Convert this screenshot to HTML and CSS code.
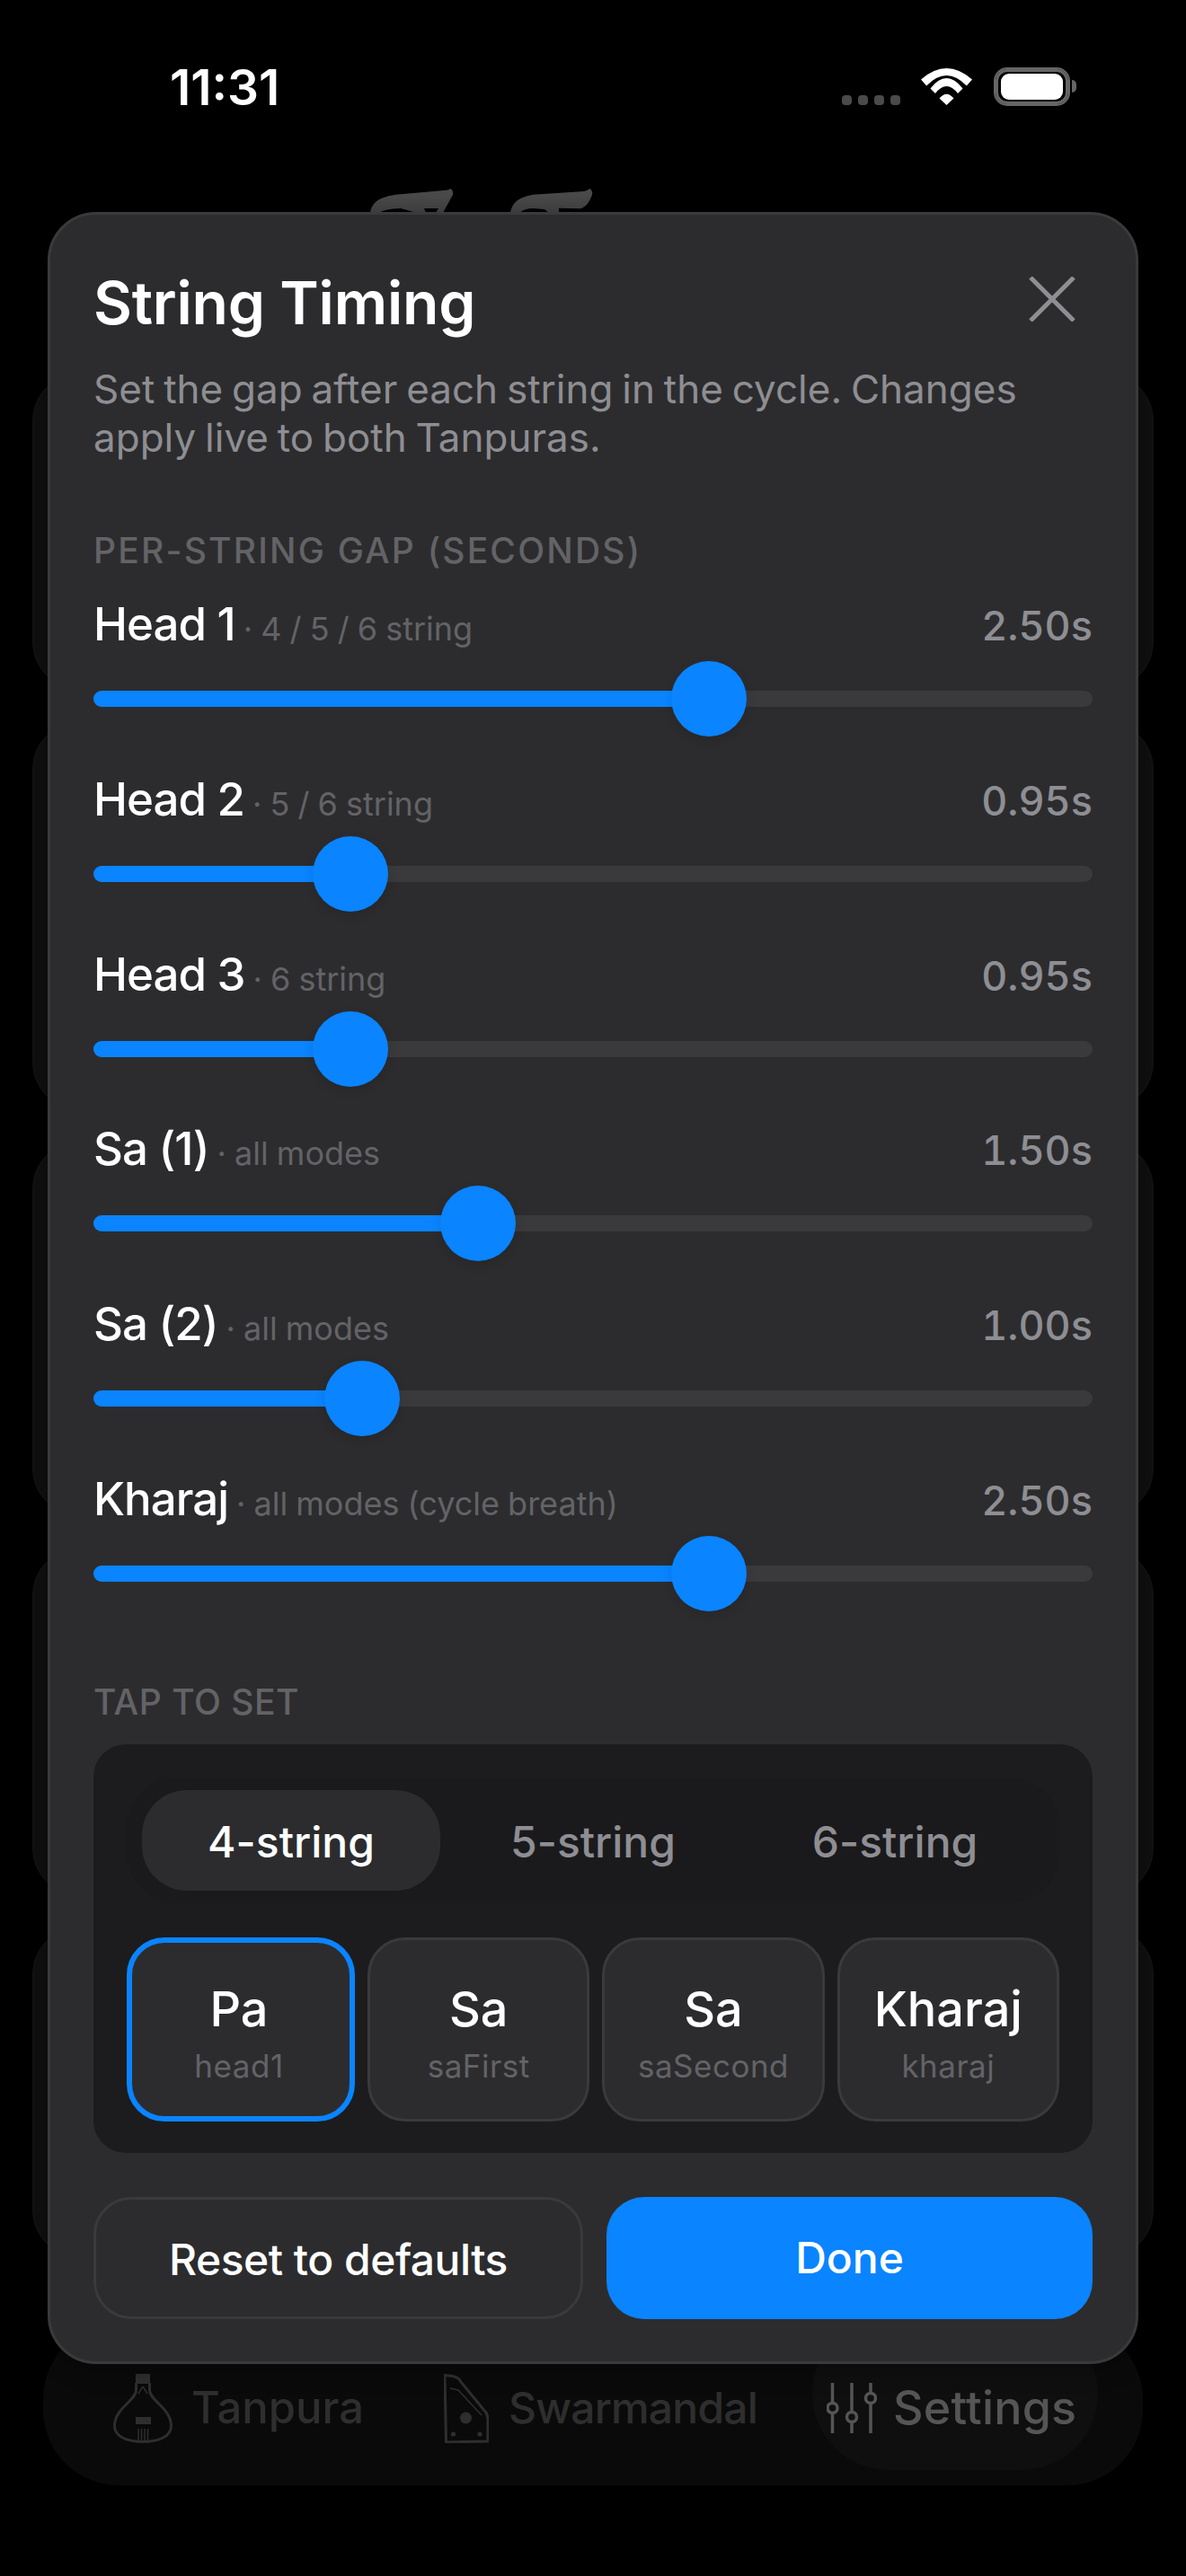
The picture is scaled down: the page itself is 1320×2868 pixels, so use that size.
FILE: index.html
```html
<!DOCTYPE html>
<html lang="en">
<head>
    <meta charset="UTF-8">
    <meta name="viewport" content="width=device-width, initial-scale=1.0">
    <title>String Timing</title>
    <link rel="stylesheet" href="styles.css">
</head>
<body>
    <div class="page">
        <!-- Status bar -->
        <div class="status">
            <span class="clock">11:31</span>
            <div class="status-icons">
                <div class="signal"><i></i><i></i><i></i><i></i></div>
                <svg class="wifi" viewBox="0 0 57 41" width="57" height="41">
                    <path d="M0 12.5Q28.5-12.5 57 12.5L50.8 19.5Q28.5-3.5 6.2 19.5Z"/>
                    <path d="M10.5 22.5Q28.5-.5 46.5 22.5L41 28Q28.5 12 16 28Z"/>
                    <path d="M20.5 33.5Q28.5 24 36.5 33.5L28.5 41Z"/>
                </svg>
                <div class="battery"><div class="battery-level"></div></div>
                <div class="battery-nub"></div>
            </div>
        </div>

        <!-- Dimmed screen behind the sheet -->
        <svg class="logo" viewBox="0 0 250 27" width="250" height="27">
            <path fill-rule="evenodd" d="M0 27C2 16 8 10 28 6.7L84.7 1.7Q87 1.5 89.7 0Q93 3 92 6.7L81 27ZM10 27Q16 22.5 34 22L52 27ZM60 22L76 22L73 27L62 27Z"/>
            <path fill-rule="evenodd" d="M156 27C158 16 164 10 181 6.7L238 3Q241 2.5 244.7 0Q248 3 247 7Q243 19 234.7 22.3L210 21.7L210 27ZM166 27Q172 22 181 22L194 23L199 27Z"/>
        </svg>
        <div class="cards">
            <div class="card card-a"></div>
            <div class="card card-b"></div>
            <div class="card card-c"></div>
            <div class="card card-d"></div>
            <div class="card card-e"></div>
        </div>
        <nav class="tabbar">
            <div class="tab tab-tanpura">
                <svg class="tab-icon" viewBox="0 0 66 77" width="66" height="77">
                    <rect class="solid" x="25" y="0" width="16" height="11"/>
                    <path d="M25.5 10V18C25.5 30 1.5 38 1.5 58C1.5 70 16 75.5 33 75.5C50 75.5 64.5 70 64.5 58C64.5 38 40.5 30 40.5 18V10"/>
                    <path class="inner" d="M33 14L28 22M33 14L38 22"/>
                    <rect class="solid" x="25" y="48" width="17" height="8"/>
                    <path class="inner" d="M28 61V75M31.5 61V75M35 61V75M38.5 61V75"/>
                </svg>
                <span>Tanpura</span>
            </div>
            <div class="tab tab-swar">
                <svg class="tab-icon" viewBox="0 0 50 77" width="50" height="77">
                    <path d="M1 1.5L10 2.5Q17 4 19 9L47 43Q49 47 49 52V75L2.5 76Z"/>
                    <path class="inner" d="M7 16L16 18L42 46"/>
                    <circle class="solid" cx="24.5" cy="49" r="6.5"/>
                    <circle class="solid" cx="10.5" cy="67" r="2.6"/>
                    <circle class="solid" cx="40" cy="67" r="2.6"/>
                </svg>
                <span>Swarmandal</span>
            </div>
            <div class="tab tab-settings">
                <svg class="tab-icon" viewBox="0 0 56 56" width="56" height="56">
                    <path d="M6.5 0V56M28 0V56M49 0V56"/>
                    <circle class="knob" cx="6.5" cy="28" r="5.5"/>
                    <circle class="knob" cx="28" cy="38" r="5.5"/>
                    <circle class="knob" cx="49" cy="17" r="5.5"/>
                </svg>
                <span>Settings</span>
            </div>
        </nav>

        <!-- Sheet -->
        <section class="sheet">
            <div class="sheet-head">
                <h1>String Timing</h1>
                <svg class="close" viewBox="0 0 52 50" width="52" height="50">
                    <path d="M2 1L50 49M50 1L2 49"/>
                </svg>
            </div>
            <p class="intro">Set the gap after each string in the cycle. Changes apply live to both Tanpuras.</p>

            <h2 class="section-label gap-label">PER-STRING GAP (SECONDS)</h2>
            <div class="sliders">
                <div class="slider-row">
                    <div class="slider-head">
                        <div class="slider-name">Head 1<small>· 4 / 5 / 6 string</small></div>
                        <span class="slider-value">2.50s</span>
                    </div>
                    <div class="slider" style="--v:.625"><div class="fill"></div><div class="thumb"></div></div>
                </div>
                <div class="slider-row">
                    <div class="slider-head">
                        <div class="slider-name">Head 2<small>· 5 / 6 string</small></div>
                        <span class="slider-value">0.95s</span>
                    </div>
                    <div class="slider" style="--v:.2375"><div class="fill"></div><div class="thumb"></div></div>
                </div>
                <div class="slider-row">
                    <div class="slider-head">
                        <div class="slider-name">Head 3<small>· 6 string</small></div>
                        <span class="slider-value">0.95s</span>
                    </div>
                    <div class="slider" style="--v:.2375"><div class="fill"></div><div class="thumb"></div></div>
                </div>
                <div class="slider-row">
                    <div class="slider-head">
                        <div class="slider-name">Sa (1)<small>· all modes</small></div>
                        <span class="slider-value">1.50s</span>
                    </div>
                    <div class="slider" style="--v:.375"><div class="fill"></div><div class="thumb"></div></div>
                </div>
                <div class="slider-row">
                    <div class="slider-head">
                        <div class="slider-name">Sa (2)<small>· all modes</small></div>
                        <span class="slider-value">1.00s</span>
                    </div>
                    <div class="slider" style="--v:.25"><div class="fill"></div><div class="thumb"></div></div>
                </div>
                <div class="slider-row">
                    <div class="slider-head">
                        <div class="slider-name">Kharaj<small>· all modes (cycle breath)</small></div>
                        <span class="slider-value">2.50s</span>
                    </div>
                    <div class="slider" style="--v:.625"><div class="fill"></div><div class="thumb"></div></div>
                </div>
            </div>

            <h2 class="section-label tap-label">TAP TO SET</h2>
            <div class="tap-panel">
                <div class="segments">
                    <div class="segment active">4-string</div>
                    <div class="segment">5-string</div>
                    <div class="segment">6-string</div>
                </div>
                <div class="tiles">
                    <div class="tile active"><strong>Pa</strong><span>head1</span></div>
                    <div class="tile"><strong>Sa</strong><span>saFirst</span></div>
                    <div class="tile"><strong>Sa</strong><span>saSecond</span></div>
                    <div class="tile"><strong>Kharaj</strong><span>kharaj</span></div>
                </div>
            </div>

            <div class="actions">
                <button type="button" class="btn btn-reset">Reset to defaults</button>
                <button type="button" class="btn btn-done">Done</button>
            </div>
        </section>
    </div>
</body>
</html>
```

FILE: styles.css
```css
/* General Reset */
* {
    margin: 0;
    padding: 0;
    box-sizing: border-box;
}

body {
    background-color: #000;
    font-family: Inter, "Noto Sans", sans-serif;
}

.page {
    position: relative;
    width: 1320px;
    height: 2868px;
    overflow: hidden;
    background-color: #000;
}

/* Status bar */
.status {
    display: flex;
    justify-content: space-between;
    height: 210px;
    padding: 66px 122px 0 189px;
}

.clock {
    color: #fff;
    font-size: 55px;
    line-height: 62px;
    font-weight: 600;
}

.status-icons {
    display: flex;
    height: 43px;
    margin-top: 9px;
}

.signal {
    display: flex;
    gap: 6.5px;
    align-self: flex-end;
    margin-bottom: 1px;
}

.signal i {
    width: 11.5px;
    height: 11px;
    border-radius: 4px;
    background-color: #4a4a4a;
}

.wifi {
    margin: 1px 0 0 23px;
    fill: #fff;
}

.battery {
    width: 85px;
    height: 43px;
    margin-left: 24px;
    padding: 5px 6px;
    border: 2px solid #666;
    border-radius: 15px;
    box-shadow: inset 0 0 0 3px #666;
}

.battery-level {
    height: 100%;
    border-radius: 9px;
    background-color: #fff;
}

.battery-nub {
    width: 5px;
    height: 14px;
    margin: 14px 0 0 2px;
    border-radius: 0 5px 5px 0;
    background-color: #666;
}

/* Dimmed screen */
.logo {
    display: block;
    margin-left: 412px;
    fill: #4c4c4c;
}

.cards {
    display: flex;
    flex-direction: column;
    gap: 34.5px;
    margin: 178px 36px 0;
}

.card {
    border: 2px solid #131313;
    border-radius: 54px;
    background-color: #101011;
}

.card-a { height: 353px; }
.card-b { height: 433px; }
.card-c { height: 418px; }
.card-d { height: 388px; }
.card-e { height: 369px; }

.tabbar {
    display: flex;
    align-items: center;
    width: 1224px;
    height: 180px;
    margin: 73px 0 0 48px;
    padding-top: 8px;
    border-radius: 84px;
    background-color: #0a0a0a;
}

.tab {
    display: flex;
    align-items: center;
    font-size: 49px;
    line-height: 60px;
    font-weight: 500;
    color: #2e2e2e;
}

.tab-icon {
    fill: none;
    stroke: currentColor;
    stroke-width: 3;
}

.tab-icon .solid {
    fill: currentColor;
    stroke: none;
}

.tab-icon .inner {
    stroke-width: 1.5;
}

.tab-tanpura {
    gap: 21px;
    margin-left: 78px;
}

.tab-swar {
    gap: 22px;
    margin-left: 89px;
    font-size: 48px;
    letter-spacing: -0.8px;
}

.tab-settings {
    gap: 18px;
    height: 170px;
    margin: -32px 0 0 61px;
    padding: 32px 24px 0 16px;
    border-radius: 85px;
    background-color: #0f0f0f;
    color: #555;
    font-size: 52px;
    letter-spacing: 0.2px;
}

.tab-settings .tab-icon {
    stroke-width: 3.5;
}

.tab-settings .knob {
    fill: #0f0f0f;
}

/* Sheet */
.sheet {
    position: absolute;
    top: 236px;
    left: 53px;
    width: 1214px;
    padding: 56px 48px 47px;
    border: 3px solid #3a3a3c;
    border-radius: 54px;
    background-color: #2c2c2e;
    box-shadow: 0 0 30px rgba(0, 0, 0, 0.4);
}

.sheet-head {
    display: flex;
    justify-content: space-between;
    align-items: center;
}

.sheet-head h1 {
    color: #fff;
    font-size: 66px;
    line-height: 84px;
    font-weight: 600;
    letter-spacing: -0.2px;
}

.close {
    margin: -8px 19px 0 0;
    fill: none;
    stroke: #8e8e93;
    stroke-width: 5;
}

.intro {
    margin-top: 27px;
    color: #8e8e93;
    font-size: 44px;
    line-height: 54px;
    word-spacing: -2.5px;
}

.section-label {
    color: #636366;
    font-size: 39px;
    line-height: 48px;
    font-weight: 500;
}

.gap-label {
    margin-top: 75px;
    letter-spacing: 2.2px;
}

.tap-label {
    margin-top: 77px;
    letter-spacing: 0.5px;
}

.sliders {
    display: flex;
    flex-direction: column;
    gap: 38.8px;
    margin-top: 27px;
}

.slider-head {
    display: flex;
    justify-content: space-between;
    align-items: baseline;
    height: 62px;
    margin-bottom: 10px;
}

.slider-name {
    color: #fff;
    font-size: 51px;
    line-height: 62px;
    font-weight: 500;
    letter-spacing: -1px;
}

.slider-name small {
    margin-left: 9px;
    color: #636366;
    font-size: 36px;
    font-weight: 400;
    letter-spacing: 0;
    word-spacing: -1px;
}

.slider-value {
    color: #8e8e93;
    font-size: 45px;
    line-height: 62px;
    font-weight: 500;
    font-variant-numeric: tabular-nums;
}

.slider {
    position: relative;
    height: 84px;
    --pos: calc(42px + (100% - 84px) * var(--v));
}

.slider::before {
    content: "";
    position: absolute;
    top: 33px;
    left: 0;
    width: 100%;
    height: 18px;
    border-radius: 9px;
    background-color: #3a3a3c;
}

.fill {
    position: absolute;
    top: 33px;
    left: 0;
    width: var(--pos);
    height: 18px;
    border-radius: 9px;
    background-color: #0a84ff;
}

.thumb {
    position: absolute;
    top: 0;
    left: var(--pos);
    width: 84px;
    height: 84px;
    margin-left: -42px;
    border-radius: 50%;
    background-color: #0a84ff;
    box-shadow: 0 4px 12px rgba(0, 0, 0, 0.12);
}

/* Tap to set */
.tap-panel {
    margin-top: 23px;
    padding: 37px 37px 35px;
    border-radius: 36px;
    background-color: #1c1c1e;
}

.segments {
    display: flex;
    gap: 4px;
    padding: 14px 17px;
    border-radius: 56px;
    background-color: #1a1a1c;
}

.segment {
    flex: 1;
    height: 112px;
    border-radius: 50px;
    color: #8e8e93;
    font-size: 48px;
    line-height: 116px;
    font-weight: 500;
    text-align: center;
}

.segment.active {
    background-color: #2c2c2e;
    color: #fff;
}

.tiles {
    display: grid;
    grid-template-columns: 254px repeat(3, 1fr);
    gap: 14px;
    margin-top: 38px;
}

.tile {
    display: flex;
    flex-direction: column;
    align-items: center;
    height: 205px;
    padding-top: 44px;
    border: 3px solid #3a3a3c;
    border-radius: 42px;
    background-color: #2c2c2e;
}

.tile.active {
    padding: 41px 4px 0 0;
    border: 6px solid #0a84ff;
}

.tile strong {
    color: #fff;
    font-size: 54px;
    line-height: 66px;
    font-weight: 500;
}

.tile span {
    margin-top: 8px;
    color: #636366;
    font-size: 35px;
    line-height: 44px;
    letter-spacing: 0.5px;
}

/* Buttons */
.actions {
    display: grid;
    grid-template-columns: 545px 1fr;
    gap: 26px;
    margin-top: 49px;
}

.btn {
    height: 136px;
    border-radius: 42px;
    color: #fff;
    font-family: inherit;
    font-size: 48px;
    font-weight: 500;
}

.btn-reset {
    padding-top: 4px;
    border: 3px solid #3a3a3c;
    background-color: transparent;
    letter-spacing: -0.5px;
}

.btn-done {
    border: none;
    background-color: #0a84ff;
}
```
